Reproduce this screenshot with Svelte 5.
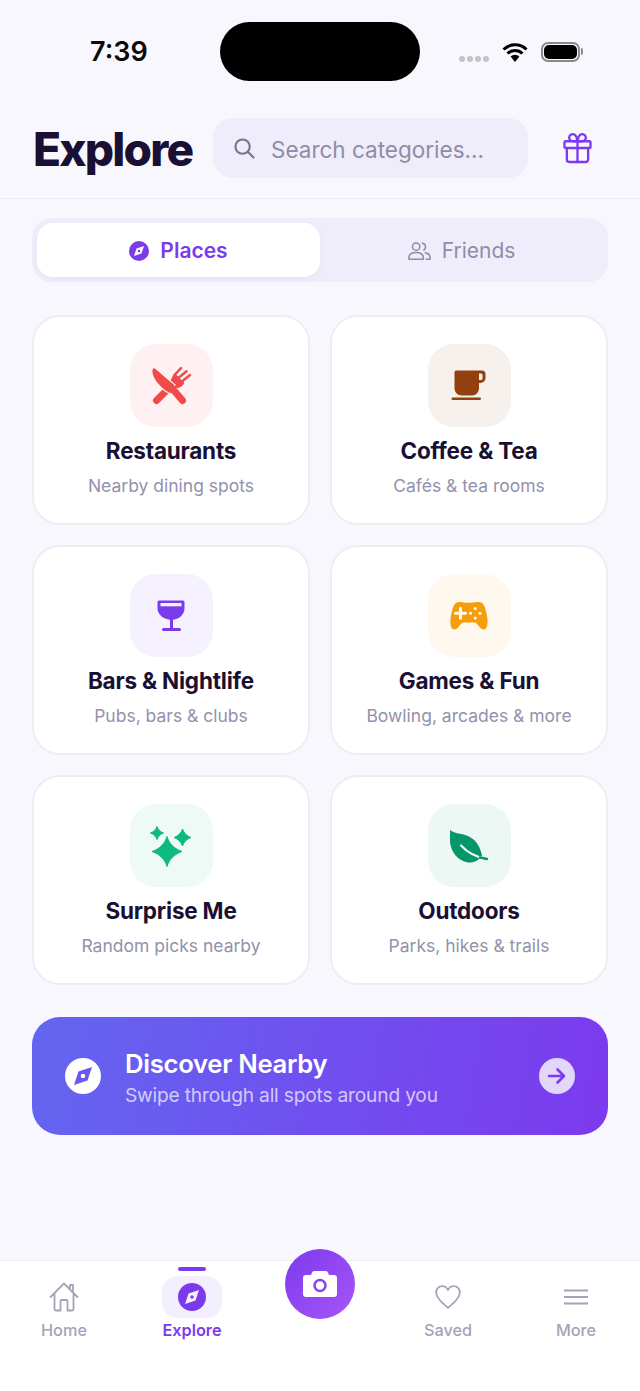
<script>
  const cards = [
    { icon: 'food', title: 'Restaurants', sub: 'Nearby dining spots' },
    { icon: 'coffee', title: 'Coffee & Tea', sub: 'Cafés & tea rooms' },
    { icon: 'bar', title: 'Bars & Nightlife', sub: 'Pubs, bars & clubs' },
    { icon: 'game', title: 'Games & Fun', sub: 'Bowling, arcades & more' },
    { icon: 'spark', title: 'Surprise Me', sub: 'Random picks nearby' },
    { icon: 'leaf', title: 'Outdoors', sub: 'Parks, hikes & trails' }
  ];
</script>

{#snippet compass(fg, bg)}
  <svg viewBox="0 0 24 24" class="fill">
    <circle cx="12" cy="12" r="12" fill={bg} />
    <path d="M18 6 15 15 6 18 9 9Z" fill={fg} />
    <circle cx="12" cy="12" r="1.5" fill={bg} />
  </svg>
{/snippet}

<div class="page">
  <div class="status">
    <span class="time">7:39</span>
    <div class="island"></div>
    <div class="sys">
      <div class="dots"><i></i><i></i><i></i><i></i></div>
      <svg class="wifi" viewBox="0 0 26 20">
        <path d="M1.5 7.5a16.5 16.5 0 0 1 23 0M5.5 11.5a11 11 0 0 1 15 0" fill="none" stroke="#000" stroke-width="3" />
        <path d="M8.6 14.6a6.4 6.4 0 0 1 8.800 0L13 20Z" fill="#000" />
      </svg>
      <div class="battery"><div></div></div>
    </div>
  </div>

  <header>
    <h1>Explore</h1>
    <div class="search">
      <svg viewBox="0 0 22 22" class="stroke">
        <circle cx="9" cy="9" r="7.500" />
        <path d="m14.500 14.500 6 6" />
      </svg>
      <span>Search categories...</span>
    </div>
    <svg class="gift" viewBox="0 0 30 32">
      <rect x="1.500" y="9" width="27" height="7" rx="1.500" />
      <path d="M4 16v12a2.500 2.500 0 0 0 2.500 2.500h17A2.500 2.500 0 0 0 26 28V16M15 9v21.500" />
      <path d="M15 9h-5a3.700 3.700 0 1 1 3-6c1.500 1.800 2 6 2 6Zm0 0h5a3.700 3.700 0 1 0-3-6c-1.500 1.800-2 6-2 6Z" />
    </svg>
  </header>

  <main>
    <div class="tabs">
      <div class="tab active">
        <span class="tab-icon">{@render compass('#fff', '#7c3aed')}</span>
        Places
      </div>
      <div class="tab">
        <svg class="tab-people stroke" viewBox="0 0 24 20">
          <circle cx="8.500" cy="5.500" r="3.800" />
          <path d="M1 18.500v-1.500c0-3.500 3-5.500 7.500-5.500s7.500 2 7.500 5.500v1.500ZM15 2a3.800 3.800 0 0 1 1.500 7M18 11.800c3 .5 5 2.400 5 5.200v1.500h-4" />
        </svg>
        Friends
      </div>
    </div>

    <div class="grid">
      {#each cards as c}
        <div class="card">
          <div class="icon {c.icon}">
            <svg viewBox="0 0 44 44" class="fill">
              {#if c.icon === 'food'}
                <path d="M7.500 36.500 22 22" stroke="#f04a4a" stroke-width="7" stroke-linecap="round" />
                <path d="M25.500 9.500 35 19C33 23 28 24.500 24.500 23L20 20.500Z" fill="#f04a4a" stroke="#f04a4a" stroke-linejoin="round" />
                <path d="M26.500 10 32 4.200M30 13.500 37.500 7.200M33.500 17 41 11" stroke="#f04a4a" stroke-width="2.500" stroke-linecap="round" />
                <path d="M3.800 4C4.800 3 5.800 3.500 7 4.500L26 21 22 30C13 27 3 15 2.800 7.500 2.800 6 3 5 3.800 4Z" fill="#f04a4a" stroke="#fff1f1" stroke-width="1.200" />
                <path d="M22 23 33.500 36.500" stroke="#f04a4a" stroke-width="7" stroke-linecap="round" />
              {:else if c.icon === 'coffee'}
                <path d="M7.500 8a1.500 1.500 0 0 1 1.500-1.500h26A3.500 3.500 0 0 1 38.500 10v4a5 5 0 0 1-5 5H32v5.500a7 7 0 0 1-7 7H14.500a7 7 0 0 1-7-7ZM32 9.500V16h2a1.500 1.500 0 0 0 1.500-1.500V11A1.500 1.500 0 0 0 34 9.500Z" fill="#92400e" fill-rule="evenodd" />
                <rect x="4.500" y="33.500" width="29.500" height="2.500" rx="1.200" fill="#92400e" />
              {:else if c.icon === 'bar'}
                <path d="M10 6.500h24a1.500 1.500 0 0 1 1.500 1.500v6c0 6.500-5 11-11.500 11.700V34h6.500a1.500 1.500 0 0 1 0 3h-16a1.500 1.500 0 0 1 0-3H21v-8.300C14 25 8.500 20.500 8.500 14V8A1.500 1.500 0 0 1 10 6.500Z" fill="#7c3aed" />
                <rect x="11.500" y="9" width="21" height="3.300" fill="#f5f1fe" />
              {:else if c.icon === 'game'}
                <path d="M12 8c3-.5 6 .8 10 .8s7-1.300 10-.8c4 .7 5.500 3 7 9 1.500 6 2.500 12 .5 16.500-1.500 3-5 2.500-7-.5-2-2.500-3-4.500-5.500-4.500H17c-2.500 0-3.500 2-5.500 4.500-2 3-5.500 3.500-7 .5-2-4.500-1-10.500.5-16.500 1.500-6 3-8.300 7-9Z" fill="#f59e0b" />
                <path d="M8.500 19.200h10M13.500 14.200v10" stroke="#fff8ee" stroke-width="3" stroke-linecap="round" />
                <g fill="#fff8ee"><circle cx="28.200" cy="14.500" r="1.500" /><circle cx="28.200" cy="24" r="1.500" /><circle cx="23.500" cy="19.200" r="1.500" /><circle cx="33" cy="19.200" r="1.500" /></g>
              {:else if c.icon === 'spark'}
                <g fill="#10b981" stroke="#10b981" stroke-linejoin="round">
                  <path d="M18 12.500C20 19.500 25.500 25 33 27.500 25.500 30 20 35.500 18 42.500 16 35.500 10.500 30 3 27.500 10.500 25 16 19.500 18 12.500Z" />
                  <path d="M8 2.500C9 5.500 11.500 8 14.500 9 11.500 10 9 12.500 8 15.500 7 12.500 4.500 10 1.500 9 4.500 8 7 5.500 8 2.500Z" />
                  <path d="M33.500 5C34.800 9 37.800 12 41.800 13.500 37.800 15 34.800 18 33.500 22 32.200 18 29.200 15 25.200 13.500 29.200 12 32.200 9 33.500 5Z" />
                </g>
              {:else}
                <path d="M3 6c5 4 12 3 19 6.500 8 4 11.500 11.500 13 19-3 5-8 7.500-14 7C11 37 4 28 3 18Z" fill="#059669" />
                <path d="M14 21.500C21 29 28 33 39.500 35" fill="none" stroke="#eef8f4" stroke-width="2.200" stroke-linecap="round" />
                <path d="M33 33.500 40 35" stroke="#059669" stroke-width="2.500" stroke-linecap="round" />
              {/if}
            </svg>
          </div>
          <div class="title">{c.title}</div>
          <div class="sub">{c.sub}</div>
        </div>
      {/each}
    </div>

    <div class="banner">
      <span class="banner-compass">{@render compass('#6a57ef', '#fff')}</span>
      <div class="banner-text">
        <div class="banner-title">Discover Nearby</div>
        <div class="banner-sub">Swipe through all spots around you</div>
      </div>
      <div class="go">
        <svg viewBox="0 0 20 20" class="stroke">
          <path d="M2 10h15M10.500 3.500 17 10l-6.500 6.500" />
        </svg>
      </div>
    </div>
  </main>

  <nav>
    <div class="item">
      <div class="nav-icon">
        <svg class="home stroke" viewBox="0 0 30 30">
          <path d="M1.500 15 15 1.500 28.500 15M5.500 11.500V27a1.500 1.500 0 0 0 1.500 1.500h4.500V19a1 1 0 0 1 1-1h5a1 1 0 0 1 1 1v9.500H23a1.500 1.500 0 0 0 1.500-1.500V11.500M21 7.500V3h3v7.500" />
        </svg>
      </div>
      <span>Home</span>
    </div>
    <div class="item current">
      <div class="bar-top"></div>
      <div class="nav-icon">
        <span class="nav-compass">{@render compass('#f5f1fe', '#7c3aed')}</span>
      </div>
      <span>Explore</span>
    </div>
    <div class="item">
      <div class="camera">
        <svg viewBox="0 0 34 26" class="fill">
          <path d="M3 4h5l1-2.500A2.500 2.500 0 0 1 11.400 0h11.200A2.500 2.500 0 0 1 25 1.500L26 4h5a3 3 0 0 1 3 3v16a3 3 0 0 1-3 3H3a3 3 0 0 1-3-3V7a3 3 0 0 1 3-3Z" fill="#fff" />
          <circle cx="17" cy="14.500" r="5.500" fill="#fff" stroke="#8645ee" stroke-width="2.500" />
        </svg>
      </div>
    </div>
    <div class="item">
      <div class="nav-icon">
        <svg class="heart stroke" viewBox="0 0 26 24">
          <path d="M13 22.800C7 17.500 1.200 13 1.200 7.500 1.200 3.800 4 1.200 7.200 1.200c2.500 0 4.500 1.300 5.800 3.800 1.300-2.500 3.300-3.800 5.800-3.800 3.200 0 6 2.600 6 6.300 0 5.500-5.800 10-11.800 15.300Z" />
        </svg>
      </div>
      <span>Saved</span>
    </div>
    <div class="item">
      <div class="nav-icon">
        <svg class="menu stroke" viewBox="0 0 24 16">
          <path d="M0 1.500h24M0 8h24M0 14.500h24" />
        </svg>
      </div>
      <span>More</span>
    </div>
  </nav>
</div>

<style>
  :global(body) {
    margin: 0;
    background: #f8f7fd;
  }
  svg {
    display: block;
  }
  .fill {
    width: 100%;
    height: 100%;
  }
  .stroke {
    fill: none;
    stroke: currentColor;
    stroke-width: 2;
    stroke-linecap: round;
    stroke-linejoin: round;
  }
  .page {
    width: 640px;
    height: 1391px;
    display: flex;
    flex-direction: column;
    background: #f8f7fd;
    font-family: Inter, "Liberation Sans", sans-serif;
    color: #1a1033;
    overflow: hidden;
  }

  .status {
    height: 100px;
    box-sizing: border-box;
    padding-top: 22px;
    display: grid;
    grid-template-columns: 1fr 200px 1fr;
    align-items: start;
  }
  .time {
    font-size: 27px;
    font-weight: 600;
    color: #0b0b0b;
    line-height: 60px;
    margin-left: 90px;
  }
  .island {
    height: 59px;
    background: #000;
    border-radius: 30px;
  }
  .sys {
    display: flex;
    align-items: center;
    height: 60px;
    padding-left: 39px;
  }
  .dots {
    display: flex;
    gap: 2px;
    margin-top: 13px;
  }
  .dots i {
    width: 6px;
    height: 6px;
    border-radius: 50%;
    background: #c4c4c8;
  }
  .wifi {
    width: 26px;
    height: 20px;
    margin-left: 13px;
  }
  .battery {
    position: relative;
    width: 39px;
    height: 20px;
    box-sizing: border-box;
    margin-left: 13px;
    padding: 1px;
    border: 2px solid #8a8a8d;
    border-radius: 7px;
  }
  .battery::after {
    content: "";
    position: absolute;
    right: -5px;
    top: 4px;
    width: 2px;
    height: 7px;
    border-radius: 0 2px 2px 0;
    background: #8a8a8d;
  }
  .battery div {
    height: 100%;
    background: #000;
    border-radius: 5px;
  }

  header {
    height: 99px;
    box-sizing: border-box;
    padding: 18px 48px 0 33px;
    display: flex;
    align-items: flex-start;
    border-bottom: 1px solid #ebeaf2;
  }
  h1 {
    margin: 0;
    width: 180px;
    font-size: 46px;
    font-weight: 800;
    letter-spacing: -1.800px;
    line-height: 63px;
    color: #1a1033;
  }
  .search {
    width: 315px;
    height: 60px;
    box-sizing: border-box;
    padding: 2px 0 0 21px;
    display: flex;
    align-items: center;
    gap: 16px;
    background: #efedfa;
    border-radius: 20px;
    color: #8f8ca8;
    font-size: 22.500px;
  }
  .search svg {
    width: 21px;
    height: 21px;
    color: #77748f;
    stroke-width: 2.200;
    margin-top: -2px;
  }
  .gift {
    width: 29px;
    height: 32px;
    margin: 14px 0 0 35px;
    fill: none;
    stroke: #7c3aed;
    stroke-width: 2.400;
    stroke-linejoin: round;
  }

  main {
    padding: 19px 32px 0;
    flex: 1;
  }
  .tabs {
    height: 64px;
    box-sizing: border-box;
    padding: 5px;
    display: flex;
    background: #efedfa;
    border-radius: 20px;
  }
  .tab {
    flex: 1;
    display: flex;
    align-items: center;
    justify-content: center;
    gap: 11px;
    border-radius: 16px;
    font-size: 21px;
    font-weight: 400;
    color: #8f8ca8;
    padding-top: 1px;
  }
  .tab.active {
    background: #fff;
    color: #7c3aed;
    font-weight: 600;
    box-shadow: 0 2px 6px rgba(124, 58, 237, 0.06);
  }
  .tab-icon {
    width: 20px;
    height: 20px;
  }
  .tab-people {
    width: 23px;
    height: 20px;
    stroke-width: 1.600;
    color: #8f8ca8;
  }

  .grid {
    margin-top: 33px;
    display: grid;
    grid-template-columns: 278px 278px;
    gap: 20px;
  }
  .card {
    height: 210px;
    box-sizing: border-box;
    padding-top: 27px;
    display: flex;
    flex-direction: column;
    align-items: center;
    background: #fff;
    border: 2px solid #eeedf4;
    border-radius: 28px;
  }
  .icon {
    width: 83px;
    height: 83px;
    padding: 19.500px;
    box-sizing: border-box;
    border-radius: 26px;
  }
  .food { background: #fff1f1; }
  .coffee { background: #f6f1ec; }
  .bar { background: #f5f1fe; }
  .game { background: #fff8ee; }
  .spark { background: #edfaf5; }
  .leaf { background: #edf8f4; }
  .title {
    margin-top: 8px;
    font-size: 22.500px;
    font-weight: 650;
    line-height: 32px;
    letter-spacing: -0.200px;
    color: #1a1033;
  }
  .sub {
    margin-top: 4px;
    font-size: 17.500px;
    line-height: 30px;
    color: #9391ab;
  }

  .banner {
    margin-top: 32px;
    height: 118px;
    box-sizing: border-box;
    padding: 0 33px;
    display: flex;
    align-items: center;
    background: linear-gradient(100deg, #6366f1, #7c3aed);
    border-radius: 28px;
    color: #fff;
  }
  .banner-compass {
    width: 36px;
    height: 36px;
  }
  .banner-text {
    flex: 1;
    margin-left: 24px;
    padding-top: 6px;
  }
  .banner-title {
    font-size: 25.700px;
    font-weight: 600;
    line-height: 32px;
    letter-spacing: -0.300px;
  }
  .banner-sub {
    font-size: 19.200px;
    line-height: 30px;
    color: rgba(255, 255, 255, 0.7);
    letter-spacing: -0.200px;
  }
  .go {
    width: 36px;
    height: 36px;
    box-sizing: border-box;
    padding: 8px;
    border-radius: 50%;
    background: #e3d6fb;
    color: #7c3aed;
  }
  .go svg {
    stroke-width: 2.600;
  }

  nav {
    height: 131px;
    box-sizing: border-box;
    display: flex;
    background: #fff;
    border-top: 1px solid #efeef5;
  }
  .item {
    position: relative;
    flex: 1;
    display: flex;
    flex-direction: column;
    align-items: center;
    padding-top: 15px;
    font-size: 16.300px;
    font-weight: 500;
    color: #a5a3b8;
  }
  .item span {
    line-height: 24px;
  }
  .item.current {
    color: #7c3aed;
    font-weight: 600;
  }
  .bar-top {
    position: absolute;
    top: 6px;
    width: 28px;
    height: 4px;
    border-radius: 2px;
    background: #7c3aed;
  }
  .nav-icon {
    width: 60px;
    height: 42px;
    display: flex;
    align-items: center;
    justify-content: center;
    border-radius: 16px;
  }
  .current .nav-icon {
    background: #f3effe;
  }
  .nav-compass {
    display: block;
    width: 28px;
    height: 28px;
  }
  .home {
    width: 30px;
    height: 30px;
    stroke-width: 1.800;
  }
  .heart {
    width: 26px;
    height: 24px;
    stroke-width: 1.800;
  }
  .menu {
    width: 24px;
    height: 16px;
    stroke-width: 1.800;
  }
  .camera {
    width: 70px;
    height: 70px;
    margin-top: -27px;
    box-sizing: border-box;
    padding: 22px 18px;
    border-radius: 50%;
    background: linear-gradient(135deg, #7c3aed, #a855f7);
  }
</style>
